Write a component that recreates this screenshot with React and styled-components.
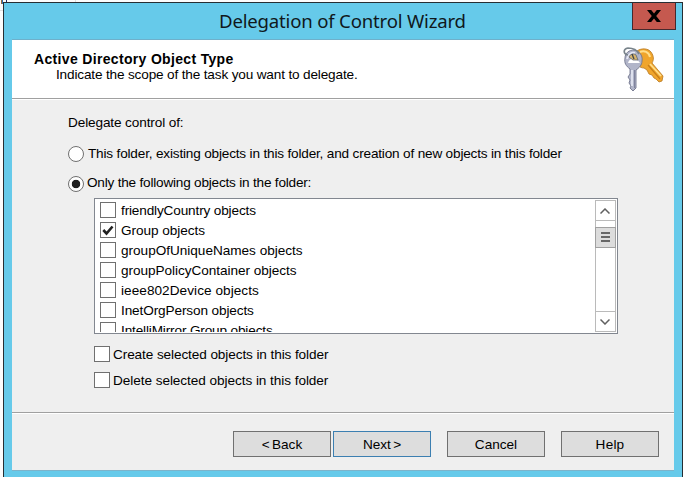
import React from "react";
import styled, { createGlobalStyle } from "styled-components";

const Global = createGlobalStyle`
  * { box-sizing: border-box; }
  body { margin: 0; background: #fff; overflow: hidden; }
`;

const Desktop = styled.div`
  width: 683px;
  height: 477px;
  padding: 2px 0 0 3px;
  background: linear-gradient(#2d6fb0, #2d6fb0) 2px 0 / 1px 4px no-repeat,
    linear-gradient(#9a6b3c, #9a6b3c) 1px 0 / 1px 4px no-repeat,
    linear-gradient(#1d2a64, #1d2a64) 6px 0 / 1px 2px no-repeat,
    linear-gradient(#e0e0e0, #e0e0e0) 0 10px / 3px 1px no-repeat,
    linear-gradient(#e0e0e0, #e0e0e0) 75px 0 / 1px 2px no-repeat, #fcfcfc;
  font: 13.6px/16px "Liberation Sans", Arial, sans-serif;
  color: #000;
  overflow: hidden;
`;

const Window = styled.div`
  width: 680px;
  height: 476px;
  border: 1px solid #262e33;
  border-bottom: 0;
  background: #66caea;
  padding: 0 8px;
`;

const TitleBar = styled.header`
  height: 36px;
  display: flex;
  justify-content: flex-end;
  align-items: flex-start;
`;

const Title = styled.h1`
  flex: 1;
  margin: 0 0 0 207px;
  padding-top: 6px;
  font: 400 18.6px/24px "Noto Sans", "Open Sans", sans-serif;
  letter-spacing: ${(p) => p.$spacing}px;
  white-space: nowrap;
  color: #10181c;
`;

const CloseButton = styled.button`
  width: 44px;
  height: 27px;
  margin-right: -2px;
  padding: 0;
  border: 1px solid #46292d;
  border-top: 0;
  background: #c5594f;
  display: grid;
  place-items: center;
`;

const Client = styled.main`
  width: 662px;
  height: 432px;
  border-top: 1px solid #6fb0cb;
  border-bottom: 1px solid #7db3ca;
  background: #efefef;
  display: flex;
  flex-direction: column;
`;

const Banner = styled.section`
  height: 59px;
  padding: 11px 10px 0 22px;
  background: #fff;
  border-bottom: 1px solid #a0a0a0;
  box-shadow: 0 1px #fff;
  display: flex;
  justify-content: space-between;
`;

const Label = styled.div`
  white-space: nowrap;
  line-height: 16px;
  font-size: ${(p) => (p.$bold ? 14 : 13.6)}px;
  font-weight: ${(p) => (p.$bold ? 700 : 400)};
  letter-spacing: ${(p) => p.$spacing || 0}px;
  margin-left: ${(p) => p.$indent || 0}px;
  padding-top: ${(p) => p.$drop || 0}px;
`;

const Keys = styled.svg`
  margin-top: -5px;
`;

const Body = styled.section`
  flex: 1;
  padding: 16px 56px 0;
`;

const Option = styled.div`
  display: flex;
  align-items: flex-start;
  height: ${(p) => p.$height}px;
  margin-top: ${(p) => p.$top || 0}px;
`;

const Radio = styled.span`
  flex: none;
  width: 16px;
  height: 16px;
  margin: 1px ${(p) => (p.$checked ? 3 : 4)}px 0 0;
  border: 1px solid #707070;
  border-radius: 50%;
  background: ${(p) =>
    p.$checked ? "radial-gradient(circle, #222 3.9px, #fff 4.6px)" : "#fff"};
`;

const Box = styled.span`
  flex: none;
  width: 16px;
  height: 16px;
  border: 1px solid #707070;
  background: #fff;
  display: grid;
  place-items: center;
`;

const ListBox = styled.div`
  width: 524px;
  height: 136px;
  margin-left: 26px;
  border: 1px solid #828790;
  background: #fff;
  padding: 1px;
  display: flex;
`;

const Items = styled.div`
  flex: 1;
  height: 132px;
  padding: 2px 0 0 4px;
  overflow: hidden;
`;

const Item = styled.div`
  height: 20px;
  display: flex;
  gap: 5px;
`;

const ScrollBar = styled.div`
  width: 21px;
  height: 132px;
  border: 1px solid #bababa;
  display: flex;
  flex-direction: column;
`;

const Arrow = styled.div`
  height: 20px;
  padding-right: 1px;
  border: 0 solid #bababa;
  border-width: ${(p) => (p.$up ? "0 0 1px" : "1px 0 0")};
  display: grid;
  place-items: center;
`;

const Track = styled.div`
  flex: 1;
  padding-top: 6px;
`;

const Thumb = styled.div`
  height: 21px;
  margin: 0 -1px;
  padding-bottom: 1px;
  border: 1px solid #a0a0a0;
  background: #dcdcdc;
  display: flex;
  flex-direction: column;
  align-items: center;
  justify-content: center;
  gap: 2px;
`;

const Grip = styled.span`
  width: 9px;
  height: 2px;
  background: #666;
`;

const Checks = styled.div`
  margin: 12px 0 0 26px;
  display: flex;
  flex-direction: column;
  gap: 10px;
`;

const CheckRow = styled.div`
  display: flex;
  gap: 3px;
  height: 16px;
`;

const Footer = styled.footer`
  height: 58px;
  border-top: 1px solid #a0a0a0;
  box-shadow: inset 0 1px #fff;
  padding: 18px 15px 0;
  display: flex;
  justify-content: flex-end;
`;

const Button = styled.button`
  width: 98px;
  height: 26px;
  margin-left: ${(p) => p.$gap}px;
  padding: 2px 0 0;
  border: 1px solid ${(p) => (p.$primary ? "#3c7fb1" : "#707070")};
  background: #ddd;
  font: inherit;
  letter-spacing: ${(p) => p.$spacing || 0}px;
  word-spacing: -1.5px;
  color: #000;
`;

const objects = [
  { name: "friendlyCountry objects", spacing: -0.15 },
  { name: "Group objects", spacing: -0.05, checked: true },
  { name: "groupOfUniqueNames objects", spacing: -0.02 },
  { name: "groupPolicyContainer objects", spacing: -0.05 },
  { name: "ieee802Device objects", spacing: 0.05 },
  { name: "InetOrgPerson objects", spacing: -0.12 },
  { name: "IntelliMirror Group objects", spacing: -0.15 },
];

function Chevron({ down }) {
  return (
    <svg width="10" height="6" viewBox="0 0 10 6" fill="none" stroke="#606060" strokeWidth="1.5">
      <path d={down ? "M.5 .5 5 5 9.500 .5" : "M.5 5.500 5 1 9.500 5.500"} />
    </svg>
  );
}

function KeysIcon() {
  return (
    <Keys width="44" height="48" viewBox="0 0 44 48">
      <g strokeLinejoin="round">
        <path d="M17 5c4-3 11-3 14 1 3 4 3 8 1 11l11 13-1 5-3 1-3-3-2-1-2-3-3-1-2-4-3-2c-4 0-8-3-8-8z" fill="#f0a52c" stroke="#b87a24" strokeWidth=".8" />
        <path d="m28 19 12 14" stroke="#c67d18" strokeWidth="1.2" />
        <path d="m30 18 11 12" stroke="#ffdf8c" strokeWidth="1.800" />
        <path d="M20 6c4-2 9 0 10 5" fill="none" stroke="#ffdf8c" strokeWidth="2" />
        <path d="M5 12c0-5 4-8 9-8 5 1 9 5 8 11 0 4-3 7-6 9v18l-3 3-3-3 1-2-2-3 1-3-2-3 2-3v-5c-4-3-6-6-5-11z" fill="#b1b5c9" stroke="#71758c" strokeWidth=".9" />
        <path d="M12 24v16" stroke="#eef0f8" strokeWidth="1.500" />
        <path d="M14.500 24v18" stroke="#80849e" />
        <path d="M7 13c1-5 5-7 8-6" fill="none" stroke="#e6e8f4" strokeWidth="2" />
        <path d="M8 17c1-5 8-6 12 0z" fill="#fff" />
        <path d="M9 11c1-3 5-4 7-2l2 5h-5z" fill="#d9b56a" stroke="#60656e" strokeWidth=".8" />
        <path d="m12 8 2 5" stroke="#3e444d" strokeWidth="1.300" />
      </g>
      <path d="M8 9C3 8 3 3 8 2c5 0 9 2 11 6" fill="none" stroke="#78838a" strokeWidth="1.700" />
    </Keys>
  );
}

export default function App() {
  return (
    <Desktop>
      <Global />
      <Window>
        <TitleBar>
          <Title $spacing={-0.19}>Delegation of Control Wizard</Title>
          <CloseButton aria-label="Close">
            <svg width="14" height="12" viewBox="0 0 14 12" fill="#000">
              <path d="M0 0h4.200L7 3.500 9.800 0H14L9.200 6 14 12H9.800L7 8.500 4.200 12H0L4.800 6z" />
            </svg>
          </CloseButton>
        </TitleBar>
        <Client>
          <Banner>
            <div>
              <Label $bold $spacing={0.33}>Active Directory Object Type</Label>
              <Label $indent={22} $spacing={-0.16}>Indicate the scope of the task you want to delegate.</Label>
            </div>
            <KeysIcon />
          </Banner>
          <Body>
            <Label $spacing={-0.12}>Delegate control of:</Label>
            <Option $top={14} $height={30}>
              <Radio />
              <Label $drop={1} $spacing={-0.18}>This folder, existing objects in this folder, and creation of new objects in this folder</Label>
            </Option>
            <Option $height={23}>
              <Radio $checked />
              <Label $spacing={-0.21}>Only the following objects in the folder:</Label>
            </Option>
            <ListBox>
              <Items>
                {objects.map((o) => (
                  <Item key={o.name}>
                    <Box>
                      {o.checked && (
                        <svg width="12" height="11" viewBox="0 0 12 11" fill="none" stroke="#222" strokeWidth="2.600">
                          <path d="M1.300 5 4.500 8.500 10.500 1.500" />
                        </svg>
                      )}
                    </Box>
                    <Label $drop={1} $spacing={o.spacing}>{o.name}</Label>
                  </Item>
                ))}
              </Items>
              <ScrollBar>
                <Arrow $up><Chevron /></Arrow>
                <Track>
                  <Thumb><Grip /><Grip /><Grip /></Thumb>
                </Track>
                <Arrow><Chevron down /></Arrow>
              </ScrollBar>
            </ListBox>
            <Checks>
              <CheckRow><Box /><Label $drop={1} $spacing={-0.1}>Create selected objects in this folder</Label></CheckRow>
              <CheckRow><Box /><Label $drop={1} $spacing={-0.06}>Delete selected objects in this folder</Label></CheckRow>
            </Checks>
          </Body>
          <Footer>
            <Button>&lt; Back</Button>
            <Button $gap={2} $primary>Next &gt;</Button>
            <Button $gap={16}>Cancel</Button>
            <Button $gap={16} $spacing={0.2}>Help</Button>
          </Footer>
        </Client>
      </Window>
    </Desktop>
  );
}
